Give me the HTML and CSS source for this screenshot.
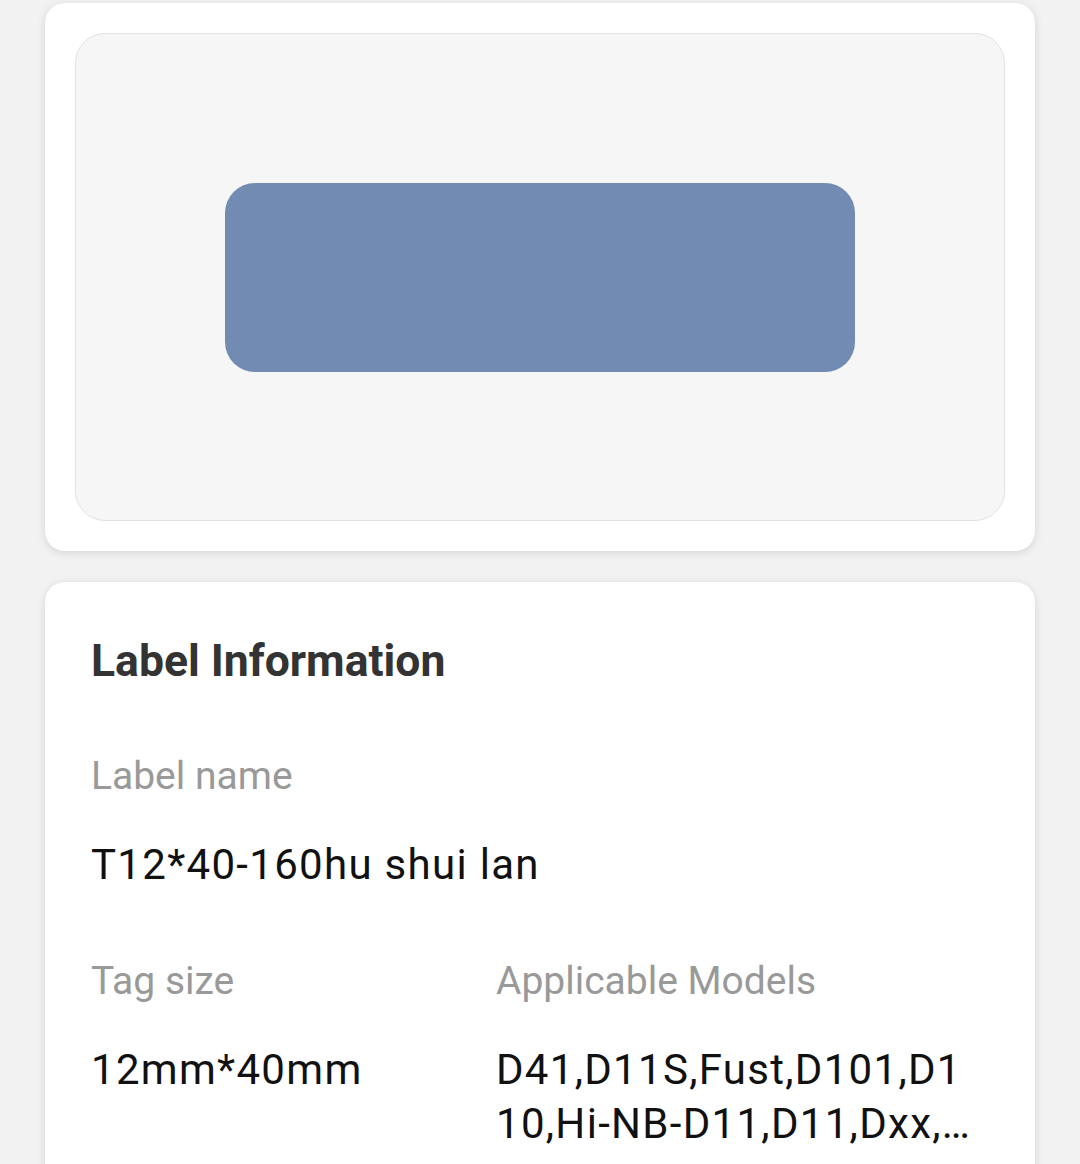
FILE: index.html
```html
<!DOCTYPE html>
<html lang="en">
<head>
<meta charset="utf-8">
<title>Label Information</title>
<link rel="stylesheet" href="styles.css">
</head>
<body>
<main class="page">
  <section class="card preview-card">
    <div class="preview">
      <div class="label-shape"></div>
    </div>
  </section>
  <section class="card info-card">
    <h2 class="info-title">Label Information</h2>
    <div class="field">
      <div class="field-label">Label name</div>
      <div class="field-value">T12*40-160hu shui lan</div>
    </div>
    <div class="field-row">
      <div class="field">
        <div class="field-label">Tag size</div>
        <div class="field-value">12mm*40mm</div>
      </div>
      <div class="field">
        <div class="field-label">Applicable Models</div>
        <div class="field-value models">D41,D11S,Fust,D101,D110,Hi-NB-D11,D11,Dxx,…</div>
      </div>
    </div>
  </section>
</main>
</body>
</html>
```

FILE: styles.css
```css
html, body {
  margin: 0;
  padding: 0;
  overflow: hidden;
}

body {
  background: #f2f2f2;
  font-family: Roboto, "Liberation Sans", Arial, sans-serif;
}

.page {
  display: flex;
  flex-direction: column;
  gap: 31px;
  padding: 3px 45px 0 45px;
}

.card {
  background: #ffffff;
  border-radius: 20px;
  box-shadow: 0 2px 10px rgba(0, 0, 0, 0.12);
}

.preview-card {
  padding: 30px;
}

.preview {
  height: 486px;
  background: #f6f6f6;
  border: 1px solid #e2e2e2;
  border-radius: 30px;
  display: flex;
  align-items: center;
  justify-content: center;
}

.label-shape {
  width: 630px;
  height: 189px;
  background: #718bb3;
  border-radius: 30px;
}

.info-card {
  padding: 52px 46px 80px 46px;
}

.info-title {
  margin: 0 0 65px 0;
  font-size: 44.5px;
  line-height: 54px;
  font-weight: 700;
  color: #333333;
}

.field-label {
  font-size: 39px;
  line-height: 46px;
  color: #999999;
  margin-bottom: 39px;
}

.field-value {
  font-size: 42px;
  line-height: 54px;
  letter-spacing: 1.3px;
  color: #111111;
}

.field-row {
  display: grid;
  grid-template-columns: 405px 1fr;
  margin-top: 66px;
}

.models {
  max-width: 486px;
  word-break: break-all;
}
```
